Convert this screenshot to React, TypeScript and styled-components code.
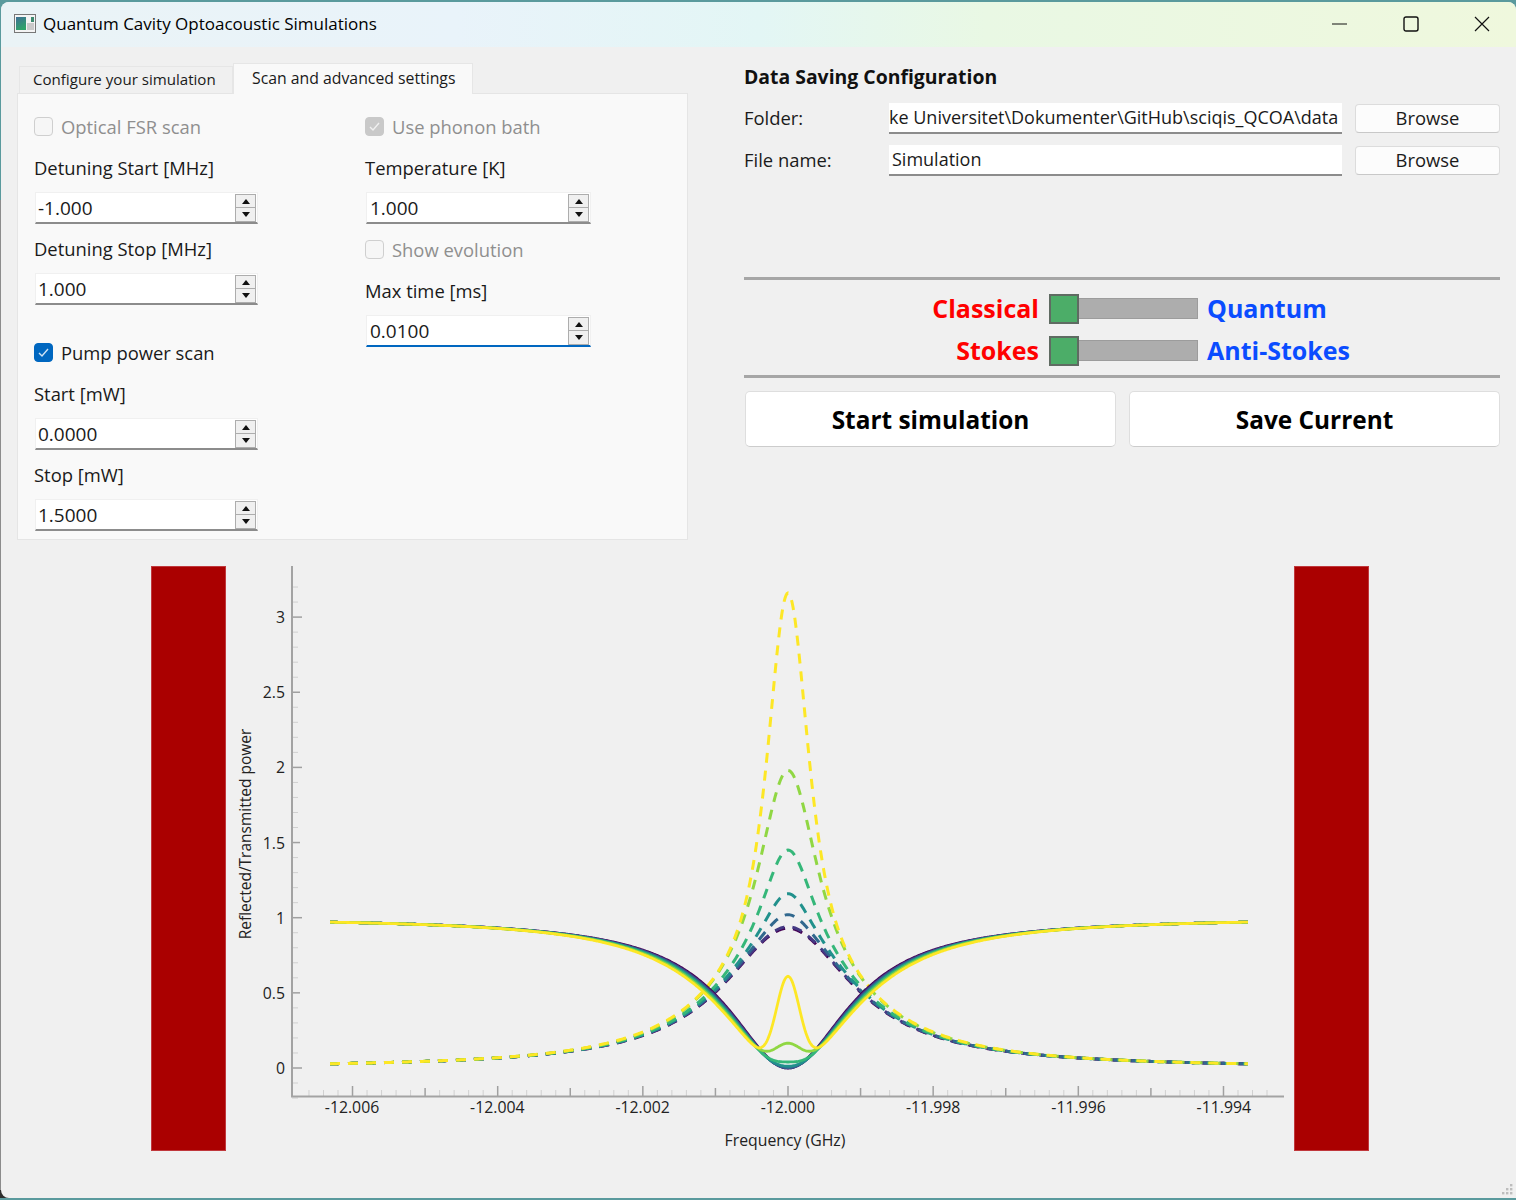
import React from "react";
import styled, { createGlobalStyle } from "styled-components";

const GlobalStyle = createGlobalStyle`
  html, body {
    margin: 0;
    padding: 0;
    background: linear-gradient(#5a9a9d 0, #5a9a9d 200px, #8c8c8c 200px, #8c8c8c 1190px, #2e2e2e 1190px);
    font-family: "Open Sans", "Noto Sans", sans-serif;
  }
`;

const Window = styled.div`
  position: relative;
  width: 1515px;
  height: 1196px;
  margin: 2px 0 0 1px;
  background: #f0f0f0;
  border-radius: 8px 8px 0 8px;
  overflow: hidden;
  color: #1a1a1a;
`;

const TitleBar = styled.div`
  box-sizing: border-box;
  display: flex;
  align-items: center;
  height: 45px;
  padding: 0 0 2px 13px;
  background: linear-gradient(90deg, #eaf3f6 0%, #e9f3fa 30%, #e3f6f5 50%, #e9f8e4 65%, #eff8dd 100%);
`;

const AppTitle = styled.div`
  margin-left: 7px;
  font-size: 17px;
  color: #000;
  flex: 1;
`;

const Controls = styled.div`
  display: flex;
  align-items: center;
  padding-right: 26px;
  gap: 55px;
`;

const Top = styled.div`
  display: flex;
  height: 519px;
  padding-left: 16px;
`;

const Left = styled.div`
  width: 671px;
`;

const Tabs = styled.div`
  display: flex;
  align-items: flex-end;
  height: 46px;
  padding: 0 0 0 2px;
`;

const Tab = styled.div<{ $active?: boolean }>`
  box-sizing: border-box;
  height: ${(p) => (p.$active ? 31 : 27)}px;
  width: ${(p) => (p.$active ? 240 : 214)}px;
  padding: ${(p) => (p.$active ? "3px 0 0 18px" : "1px 0 0 13px")};
  font-size: ${(p) => (p.$active ? 15.8 : 15.1)}px;
  line-height: 22px;
  background: ${(p) => (p.$active ? "#f9f9f9" : "#f0f0f0")};
  border: 1px solid #e6e6e6;
  border-bottom: none;
  margin-bottom: ${(p) => (p.$active ? -1 : 0)}px;
  position: relative;
`;

const Pane = styled.div`
  box-sizing: border-box;
  display: grid;
  grid-template-columns: 331px 1fr;
  height: 447px;
  padding: 20px 0 0 16px;
  background: #f9f9f9;
  border: 1px solid #e5e5e5;
`;

const Col = styled.div`
  display: flex;
  flex-direction: column;
`;

const CheckRow = styled.div<{ $top?: number; $disabled?: boolean }>`
  display: flex;
  align-items: center;
  gap: 8px;
  height: 24px;
  margin-top: ${(p) => p.$top ?? 0}px;
  font-size: 18.4px;
  color: ${(p) => (p.$disabled ? "#8f8f8f" : "#1a1a1a")};
`;

const Box = styled.div<{ $checked?: boolean; $disabled?: boolean }>`
  box-sizing: border-box;
  display: flex;
  align-items: center;
  justify-content: center;
  width: 19px;
  height: 19px;
  border-radius: 4px;
  border: 1px solid ${(p) => (p.$checked ? (p.$disabled ? "#c9c9c9" : "#0067c0") : "#cfcfcf")};
  background: ${(p) => (p.$checked ? (p.$disabled ? "#c9c9c9" : "#0067c0") : "#f6f6f6")};
`;

const Field = styled.div<{ $top?: number }>`
  display: flex;
  flex-direction: column;
  gap: 12px;
  margin-top: ${(p) => p.$top ?? 0}px;
`;

const Label = styled.div`
  height: 24px;
  line-height: 24px;
  font-size: 18.4px;
`;

const Spin = styled.div<{ $focus?: boolean; $wide?: boolean }>`
  box-sizing: border-box;
  position: relative;
  display: flex;
  align-items: center;
  width: ${(p) => (p.$wide ? 225 : 223)}px;
  height: 32px;
  margin-left: 1px;
  padding-left: ${(p) => (p.$wide ? 3 : 2)}px;
  font-size: 19px;
  background: #fff;
  border: 1px solid #f0f0f0;
  border-bottom: 2px solid ${(p) => (p.$focus ? "#0067c0" : "#8c8c8c")};
`;

const SpinButtons = styled.div`
  position: absolute;
  top: 1px;
  right: 1px;
  display: flex;
  flex-direction: column;
  width: 21px;
`;

const SpinButton = styled.div`
  box-sizing: border-box;
  display: flex;
  align-items: center;
  justify-content: center;
  height: 14px;
  background: #f0f0f0;
  border: 1px solid #adadad;
  & + & {
    border-top: none;
  }
`;

const Arrow = styled.div<{ $down?: boolean }>`
  width: 0;
  height: 0;
  border-left: 4px solid transparent;
  border-right: 4px solid transparent;
  ${(p) => (p.$down ? "border-top: 5px solid #111;" : "border-bottom: 5px solid #111;")}
`;

const Right = styled.div`
  width: 756px;
  margin-left: 56px;
  padding-top: 18px;
`;

const Heading = styled.div`
  height: 24px;
  line-height: 24px;
  font-size: 19.4px;
  font-weight: 700;
  color: #111;
`;

const FormRow = styled.div<{ $top: number }>`
  display: flex;
  align-items: center;
  height: 30px;
  margin-top: ${(p) => p.$top}px;
`;

const FormLabel = styled.div`
  width: 145px;
  padding-bottom: 2px;
  font-size: 18.4px;
`;

const TextBox = styled.div<{ $flush?: boolean }>`
  box-sizing: border-box;
  width: 453px;
  height: 31px;
  line-height: 29px;
  padding: 0 ${(p) => (p.$flush ? 0 : 3)}px;
  font-size: 18px;
  background: #fff;
  border-bottom: 2px solid #8c8c8c;
  white-space: nowrap;
  overflow: hidden;
`;

const SmallButton = styled.div`
  box-sizing: border-box;
  width: 145px;
  height: 29px;
  margin-left: 13px;
  line-height: 25px;
  text-align: center;
  font-size: 18.4px;
  background: #fcfcfc;
  border: 1px solid #dcdcdc;
  border-bottom-color: #c8c8c8;
  border-radius: 4px;
`;

const Rule = styled.div<{ $top: number }>`
  height: 3px;
  margin-top: ${(p) => p.$top}px;
  background: #a6a6a6;
`;

const SwitchRow = styled.div<{ $top: number }>`
  display: flex;
  align-items: center;
  height: 30px;
  margin-top: ${(p) => p.$top}px;
`;

const SwitchText = styled.div<{ $side: "l" | "r" }>`
  font-size: 25px;
  font-weight: 700;
  ${(p) =>
    p.$side === "l"
      ? "width: 295px; text-align: right; color: #ff0000;"
      : "margin-left: 9px; color: #0a4cff;"}
`;

const Track = styled.div`
  box-sizing: border-box;
  position: relative;
  width: 149px;
  height: 21px;
  margin-left: 10px;
  background: #adadad;
  border: 1px solid #9c9c9c;
`;

const Thumb = styled.div`
  box-sizing: border-box;
  position: absolute;
  left: -1px;
  top: -5px;
  width: 30px;
  height: 30px;
  background: #4cad68;
  border: 2px solid #5f6b62;
`;

const BigButtons = styled.div`
  display: flex;
  gap: 13px;
  margin: 13px 0 0 1px;
`;

const BigButton = styled.div`
  box-sizing: border-box;
  flex: 1;
  height: 56px;
  line-height: 56px;
  text-align: center;
  font-size: 24.4px;
  font-weight: 700;
  color: #000;
  background: #fff;
  border: 1px solid #dedede;
  border-bottom-color: #cccccc;
  border-radius: 5px;
`;

const PlotRow = styled.div`
  display: flex;
  align-items: flex-start;
  padding-left: 150px;
`;

const RedBar = styled.div`
  box-sizing: border-box;
  width: 75px;
  height: 585px;
  background: #aa0000;
  border: 1px solid #c0383c;
`;

const Chart = styled.svg`
  display: block;
  width: 1068px;
  height: 585px;
  font-family: "Open Sans", "Noto Sans", sans-serif;
`;

const Grip = styled.svg`
  position: absolute;
  right: 3px;
  bottom: 2px;
`;

const X0 = 788;
const Y0 = 1068;
const PX_X = 72.58;
const PX_Y = 150.3;

type Curve = {
  color: string;
  peak: number;
  h: number;
  bump: number;
  bumpW: number;
  w: number;
  tw: number;
};

const curves: Curve[] = [
  { color: "#440154", peak: 0.93, h: 0.5, bump: 0, bumpW: 0.2, w: 1.02, tw: 1.1 },
  { color: "#443983", peak: 0.94, h: 0.5, bump: 0, bumpW: 0.2, w: 1.04, tw: 1.11 },
  { color: "#31688e", peak: 1.02, h: 0.5, bump: 0.003, bumpW: 0.2, w: 1.06, tw: 1.12 },
  { color: "#21918c", peak: 1.16, h: 0.5, bump: 0.012, bumpW: 0.2, w: 1.08, tw: 1.13 },
  { color: "#35b779", peak: 1.45, h: 0.55, bump: 0.04, bumpW: 0.2, w: 1.1, tw: 1.14 },
  { color: "#90d743", peak: 1.98, h: 0.62, bump: 0.165, bumpW: 0.22, w: 1.13, tw: 1.16 },
  { color: "#fde725", peak: 3.16, h: 0.48, bump: 0.61, bumpW: 0.19, w: 1.16, tw: 1.19 },
];

function makePath(fn: (d: number) => number) {
  const pts: string[] = [];
  for (let px = 330; px <= 1248; px += 1) {
    const d = (px - X0) / PX_X;
    pts.push(`${px},${(Y0 - fn(d) * PX_Y).toFixed(2)}`);
  }
  return "M" + pts.join("L");
}

const transmitted = (c: Curve) => (d: number) => {
  const tw = 1.12 + (c.tw - 1.12) * Math.exp((-d * d) / 9);
  const base = 0.92 / (1 + (d * d) / (tw * tw));
  const k = 1 + (d * d) / (c.h * c.h);
  return base + Math.max(c.peak - 0.92, 0) / (k * k);
};

const reflected = (c: Curve) => (d: number) => {
  const w = 1.1 + (c.w - 1.1) * Math.exp((-d * d) / 9);
  const base = (d * d) / (d * d + w * w);
  return base + c.bump * Math.exp(-Math.LN2 * (d / c.bumpW) * (d / c.bumpW));
};

const yTicks = Array.from({ length: 35 }, (_, i) => i - 2);
const xTicks = Array.from({ length: 68 }, (_, i) => i - 34);

function Plot() {
  return (
    <Chart viewBox="226 566 1068 585">
      <g>
        {yTicks.map((i) => {
          const y = Y0 - i * 15.03;
          if (y < 570) return null;
          const major = i % 5 === 0;
          const big = i % 10 === 0;
          return (
            <line
              key={i}
              x1="292"
              x2={big ? 302 : major ? 300 : 298}
              y1={y}
              y2={y}
              stroke={major ? "#a0a0a0" : "#d0d0d0"}
              strokeWidth={major ? 1.5 : 1}
            />
          );
        })}
        {xTicks.map((i) => {
          const x = X0 + i * 14.516;
          if (x < 295 || x > 1284) return null;
          const big = i % 10 === 0;
          const mid = i % 5 === 0;
          return (
            <line
              key={i}
              x1={x}
              x2={x}
              y1="1096"
              y2={big ? 1086 : mid ? 1088 : 1090}
              stroke={mid ? "#a0a0a0" : "#d0d0d0"}
              strokeWidth={mid ? 1.5 : 1}
            />
          );
        })}
      </g>
      <path d="M292 566V1096.5H1284" fill="none" stroke="#a3a3a3" strokeWidth="2" />
      <g fontSize="15.8" fill="#222" textAnchor="end">
        {["0", "0.5", "1", "1.5", "2", "2.5", "3"].map((t, i) => (
          <text key={t} x="285" y={Y0 - i * 75.15 + 6}>
            {t}
          </text>
        ))}
      </g>
      <g fontSize="15.8" fill="#222" textAnchor="middle">
        {["-12.006", "-12.004", "-12.002", "-12.000", "-11.998", "-11.996", "-11.994"].map((t, i) => (
          <text key={t} x={352 + i * 145.3} y="1113">
            {t}
          </text>
        ))}
        <text x="785" y="1146">
          Frequency (GHz)
        </text>
        <text transform="translate(251 834) rotate(-90)" fontSize="15.5">
          Reflected/Transmitted power
        </text>
      </g>
      <g fill="none">
        {curves.map((c) => (
          <path
            key={c.color}
            d={makePath(transmitted(c))}
            stroke={c.color}
            strokeWidth="3"
            strokeDasharray="10 8"
          />
        ))}
        {curves.map((c) => (
          <path key={c.color} d={makePath(reflected(c))} stroke={c.color} strokeWidth="2.8" />
        ))}
      </g>
    </Chart>
  );
}

function Tick({ color }: { color: string }) {
  return (
    <svg width="13" height="11" viewBox="0 0 13 11">
      <path d="M2 6l3 3 6-7" fill="none" stroke={color} strokeWidth="1.4" />
    </svg>
  );
}

function SpinBox({ value, focus, wide }: { value: string; focus?: boolean; wide?: boolean }) {
  return (
    <Spin $focus={focus} $wide={wide}>
      {value}
      <SpinButtons>
        <SpinButton>
          <Arrow />
        </SpinButton>
        <SpinButton>
          <Arrow $down />
        </SpinButton>
      </SpinButtons>
    </Spin>
  );
}

function AppIcon() {
  return (
    <svg width="22" height="19" viewBox="0 0 22 19">
      <defs>
        <linearGradient id="ico" x1="0" y1="0" x2="0.4" y2="1">
          <stop offset="0" stopColor="#3f6f96" />
          <stop offset="1" stopColor="#2fa36a" />
        </linearGradient>
      </defs>
      <rect x="0.5" y="0.5" width="21" height="18" fill="#f4f4f4" stroke="#777" />
      <rect x="2" y="3" width="10" height="13" fill="url(#ico)" />
      <rect x="13" y="9" width="7" height="7" fill="#c9c9c9" />
      <rect x="17" y="3" width="3" height="5" fill="#3d8a70" />
    </svg>
  );
}

export default function App() {
  return (
    <>
      <GlobalStyle />
      <Window>
        <TitleBar>
          <AppIcon />
          <AppTitle>Quantum Cavity Optoacoustic Simulations</AppTitle>
          <Controls>
            <svg width="16" height="16" viewBox="0 0 16 16">
              <path d="M0 8h15" stroke="#111" strokeWidth="1" />
            </svg>
            <svg width="16" height="16" viewBox="0 0 16 16">
              <rect x="1" y="1" width="14" height="14" rx="2" fill="none" stroke="#111" strokeWidth="1.4" />
            </svg>
            <svg width="16" height="16" viewBox="0 0 16 16">
              <path d="M1 1l14 14M15 1L1 15" stroke="#111" strokeWidth="1.2" />
            </svg>
          </Controls>
        </TitleBar>
        <Top>
          <Left>
            <Tabs>
              <Tab>Configure your simulation</Tab>
              <Tab $active>Scan and advanced settings</Tab>
            </Tabs>
            <Pane>
              <Col>
                <CheckRow $disabled>
                  <Box />
                  Optical FSR scan
                </CheckRow>
                <Field $top={18}>
                  <Label>Detuning Start [MHz]</Label>
                  <SpinBox value="-1.000" />
                </Field>
                <Field $top={13}>
                  <Label>Detuning Stop [MHz]</Label>
                  <SpinBox value="1.000" />
                </Field>
                <CheckRow $top={35}>
                  <Box $checked>
                    <Tick color="#cfe3f5" />
                  </Box>
                  Pump power scan
                </CheckRow>
                <Field $top={18}>
                  <Label>Start [mW]</Label>
                  <SpinBox value="0.0000" />
                </Field>
                <Field $top={13}>
                  <Label>Stop [mW]</Label>
                  <SpinBox value="1.5000" />
                </Field>
              </Col>
              <Col>
                <CheckRow $disabled>
                  <Box $checked $disabled>
                    <Tick color="#f0f0f0" />
                  </Box>
                  Use phonon bath
                </CheckRow>
                <Field $top={18}>
                  <Label>Temperature [K]</Label>
                  <SpinBox value="1.000" wide />
                </Field>
                <CheckRow $top={13} $disabled>
                  <Box />
                  Show evolution
                </CheckRow>
                <Field $top={18}>
                  <Label>Max time [ms]</Label>
                  <SpinBox value="0.0100" focus wide />
                </Field>
              </Col>
            </Pane>
          </Left>
          <Right>
            <Heading>Data Saving Configuration</Heading>
            <FormRow $top={14}>
              <FormLabel>Folder:</FormLabel>
              <TextBox $flush>ke Universitet\Dokumenter\GitHub\sciqis_QCOA\data</TextBox>
              <SmallButton>Browse</SmallButton>
            </FormRow>
            <FormRow $top={12}>
              <FormLabel>File name:</FormLabel>
              <TextBox>Simulation</TextBox>
              <SmallButton>Browse</SmallButton>
            </FormRow>
            <Rule $top={102} />
            <SwitchRow $top={13}>
              <SwitchText $side="l">Classical</SwitchText>
              <Track>
                <Thumb />
              </Track>
              <SwitchText $side="r">Quantum</SwitchText>
            </SwitchRow>
            <SwitchRow $top={12}>
              <SwitchText $side="l">Stokes</SwitchText>
              <Track>
                <Thumb />
              </Track>
              <SwitchText $side="r">Anti-Stokes</SwitchText>
            </SwitchRow>
            <Rule $top={10} />
            <BigButtons>
              <BigButton>Start simulation</BigButton>
              <BigButton>Save Current</BigButton>
            </BigButtons>
          </Right>
        </Top>
        <PlotRow>
          <RedBar />
          <Plot />
          <RedBar />
        </PlotRow>
        <Grip width="12" height="12" viewBox="0 0 12 12" fill="#bdbdbd">
          <rect x="9" y="0" width="2.4" height="2.4" />
          <rect x="5" y="4" width="2.4" height="2.4" />
          <rect x="9" y="4" width="2.4" height="2.4" />
          <rect x="1" y="8" width="2.4" height="2.4" />
          <rect x="5" y="8" width="2.4" height="2.4" />
          <rect x="9" y="8" width="2.4" height="2.4" />
        </Grip>
      </Window>
    </>
  );
}
